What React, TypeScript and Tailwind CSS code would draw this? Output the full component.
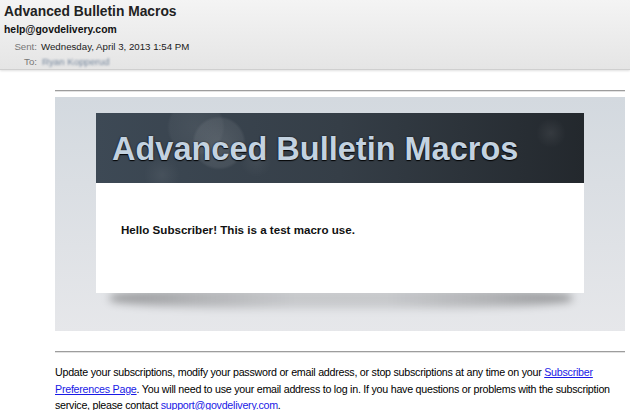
import React from "react";

const sans = '"Liberation Sans", Arial, sans-serif';

export default function App() {
  return (
    <div className="w-[630px] h-[410px] overflow-hidden bg-white" style={{ fontFamily: sans }}>
      {/* Mail header */}
      <div className="h-[70px] bg-gradient-to-b from-[#f4f4f4] to-[#e5e5e5] border-b border-[#cfcfcf] shadow-[0_1px_2px_rgba(0,0,0,0.12)] px-[4px] pt-[2px] flex flex-col">
        <div className="text-[13.8px] font-bold text-[#222] leading-[19px]">Advanced Bulletin Macros</div>
        <div className="text-[10.4px] font-bold text-[#111] leading-[15px] mt-[1px]">help@govdelivery.com</div>
        <div className="grid grid-cols-[33px_1fr] gap-x-[4px] mt-[2px] text-[9.7px] leading-[15px]">
          <span className="text-right text-[#777]">Sent:</span>
          <span className="text-[#1a1a1a]">Wednesday, April 3, 2013 1:54 PM</span>
          <span className="text-right text-[#777]">To:</span>
          <span className="pl-[1px] text-[#71839a] blur-[1.3px]">Ryan Kopperud</span>
        </div>
      </div>

      <div className="pl-[55px] pr-[5px] pt-[20px] flex flex-col">
        {/* top rule */}
        <div className="h-[2px] border-t border-[#9d9d9d] bg-[#e2e2e2]" />

        {/* Bulletin body */}
        <div className="mt-[5px] h-[234px] bg-gradient-to-b from-[#d3d9df] to-[#e6e7ea] pt-[16px] px-[41px]">
          <div className="relative">
            {/* curled drop shadow under the card */}
            <div className="absolute left-[14px] right-[12px] bottom-[-15px] h-[20px] rounded-[40%] blur-[4px] bg-[image:linear-gradient(90deg,rgba(0,0,0,0.34),rgba(0,0,0,0.22)_18%,rgba(0,0,0,0.12)_40%,rgba(0,0,0,0.12)_60%,rgba(0,0,0,0.22)_82%,rgba(0,0,0,0.34))]" />
            <div className="relative h-[70px] flex items-center pl-[16px] bg-[image:radial-gradient(circle_at_123px_30px,rgba(255,255,255,0.12)_0,rgba(255,255,255,0.07)_24px,transparent_27px),radial-gradient(circle_at_100px_14px,rgba(255,255,255,0.07)_0,rgba(255,255,255,0.04)_26px,transparent_29px),radial-gradient(circle_at_66px_62px,rgba(255,255,255,0.06)_0,transparent_18px),radial-gradient(circle_at_160px_48px,rgba(255,255,255,0.05)_0,transparent_16px),radial-gradient(circle_at_455px_20px,rgba(255,255,255,0.07)_0,transparent_15px),linear-gradient(90deg,#3d4955,#353e47_50%,#23282d)]">
              <span
                className="text-[32.5px] font-bold text-[#c3d2e0] leading-none mt-[3px]"
                style={{ textShadow: "0 1px 1px rgba(0,0,0,0.9), 0 0 2px rgba(0,0,0,0.7)" }}
              >
                Advanced Bulletin Macros
              </span>
            </div>
            <div className="relative h-[110px] bg-white pl-[25px] pt-[38px]">
              <div className="text-[11.6px] font-bold text-[#111]">
                Hello Subscriber! This is a test macro use.
              </div>
            </div>
          </div>
        </div>

        {/* bottom rule */}
        <div className="mt-[20px] h-[2px] border-t border-[#9d9d9d] bg-[#e2e2e2]" />

        <div className="mt-[11px] text-[10.7px] leading-[16.5px] tracking-[-0.25px] text-black whitespace-nowrap">
          Update your subscriptions, modify your password or email address, or stop subscriptions at any time on your{" "}
          <a className="text-[#1a1ae6] underline">Subscriber</a>
          <br />
          <a className="text-[#1a1ae6] underline">Preferences Page</a>. You will need to use your email address to log in. If you have questions or problems with the subscription
          <br />
          service, please contact <a className="text-[#1a1ae6] underline">support@govdelivery.com</a>.
        </div>
      </div>
    </div>
  );
}
